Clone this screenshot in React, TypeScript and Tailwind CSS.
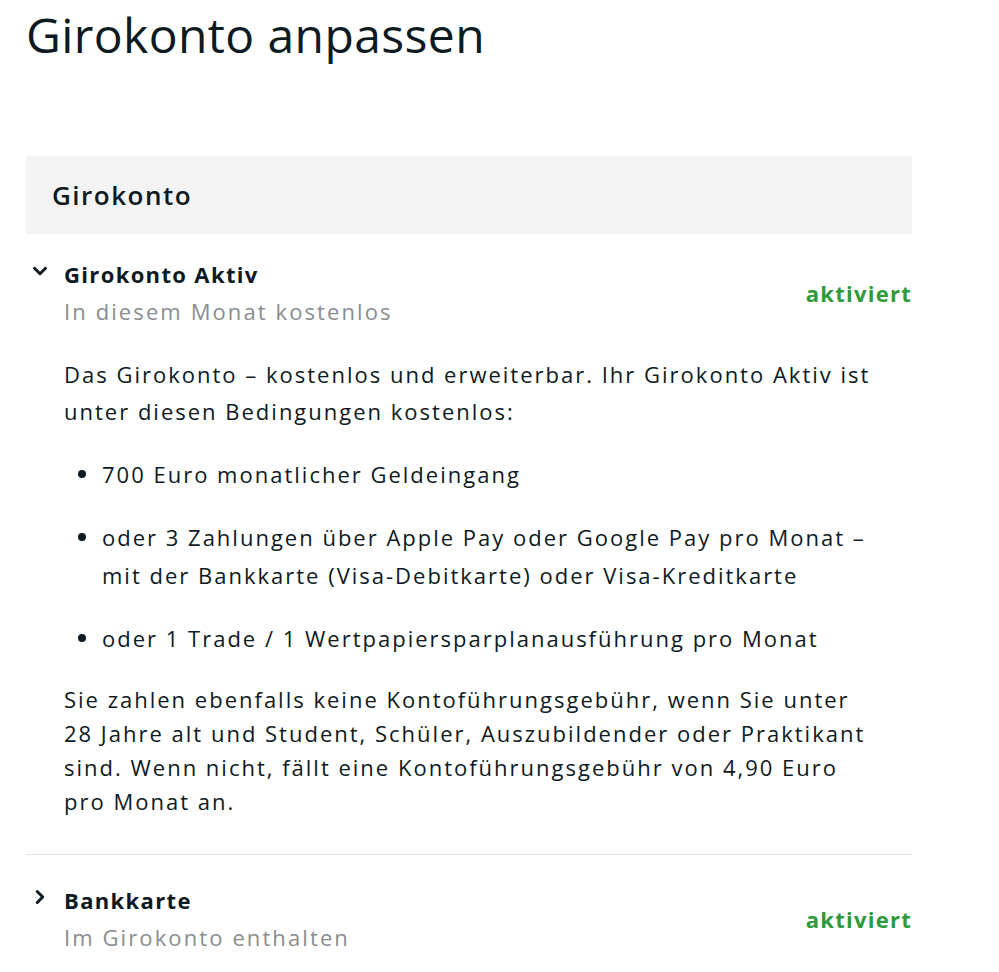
import { ChevronDown, ChevronRight } from "lucide-react";

function ProductRow({
  title,
  subtitle,
  open,
}: {
  title: string;
  subtitle: string;
  open: boolean;
}) {
  return (
    <div className="flex items-center">
      <div className="w-[38px] self-start pt-[4px] pl-[3px] text-[#0d1a22]">
        {open ? (
          <ChevronDown size={22} strokeWidth={3.2} />
        ) : (
          <ChevronRight size={22} strokeWidth={3.2} />
        )}
      </div>
      <div className="flex-1">
        <div className="text-[22px] leading-[37px] font-bold tracking-[1.35px] text-[#0d1a22]">{title}</div>
        <div className="text-[22px] leading-[37px] tracking-[2.1px] text-[#888d90]">{subtitle}</div>
      </div>
      <div className="text-[22px] font-bold tracking-[1.25px] text-[#2e9a3c]">aktiviert</div>
    </div>
  );
}

function Bullet({ children }: { children: React.ReactNode }) {
  return (
    <li className="flex">
      <span className="w-[38px] h-[38px] flex items-center pl-[14px]">
        <span className="w-[8px] h-[8px] rounded-full bg-[#0d1a22]" />
      </span>
      <span>{children}</span>
    </li>
  );
}

export default function App() {
  return (
    <main className="bg-white min-h-screen font-['Open_Sans',sans-serif] text-[#0d1a22]">
      <div className="w-[886px] ml-[26px]">
        <h1 className="pt-[6px] text-[48px] leading-[58px] font-normal tracking-[0.4px]">Girokonto anpassen</h1>

        <section className="mt-[92px]">
          <div className="h-[78px] bg-[#f3f3f3] pl-[26px] flex items-center">
            <h2 className="text-[26px] font-semibold tracking-[1.5px]">Girokonto</h2>
          </div>

          {/* Girokonto Aktiv */}
          <div className="pt-[22px] pb-[36px] border-b border-[#e5e5e5]">
            <ProductRow title="Girokonto Aktiv" subtitle="In diesem Monat kostenlos" open />

            <div className="pl-[38px] text-[22px] tracking-[2px]">
              <p className="mt-[26px] leading-[37px]">
                Das Girokonto – kostenlos und erweiterbar. Ihr Girokonto Aktiv ist
                <br />
                unter diesen Bedingungen kostenlos:
              </p>
              <ul className="mt-[25px] flex flex-col gap-[25px] leading-[38px]">
                <Bullet>700 Euro monatlicher Geldeingang</Bullet>
                <Bullet>
                  oder 3 Zahlungen über Apple Pay oder Google Pay pro Monat –
                  <br />
                  mit der Bankkarte (Visa-Debitkarte) oder Visa-Kreditkarte
                </Bullet>
                <Bullet>oder 1 Trade / 1 Wertpapiersparplanausführung pro Monat</Bullet>
              </ul>
              <p className="mt-[25px] leading-[34px]">
                Sie zahlen ebenfalls keine Kontoführungsgebühr, wenn Sie unter
                <br />
                28 Jahre alt und Student, Schüler, Auszubildender oder Praktikant
                <br />
                sind. Wenn nicht, fällt eine Kontoführungsgebühr von 4,90 Euro
                <br />
                pro Monat an.
              </p>
            </div>
          </div>

          {/* Bankkarte */}
          <div className="pt-[27px] pb-[20px]">
            <ProductRow title="Bankkarte" subtitle="Im Girokonto enthalten" open={false} />
          </div>
        </section>
      </div>
    </main>
  );
}
